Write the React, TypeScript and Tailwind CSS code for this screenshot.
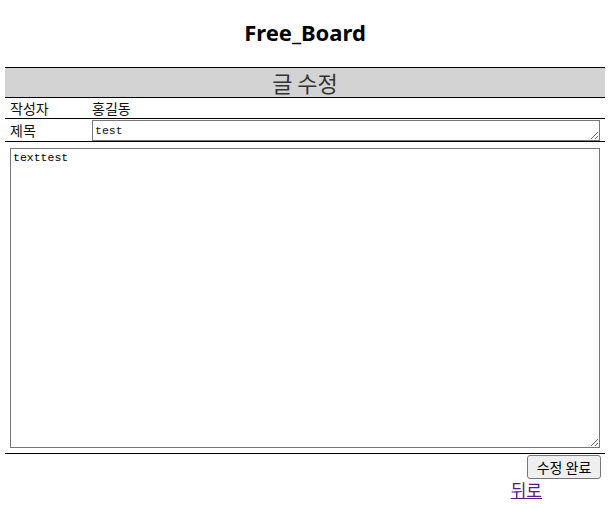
import React from "react";

export default function App() {
  return (
    <div className="w-[610px] h-[509px] bg-white text-black font-['Noto_Sans_CJK_KR','Noto_Sans',sans-serif]">
      <h2 className="pt-[17px] h-[67px] text-center text-[22px] font-bold leading-[30px] font-['Noto_Sans','Noto_Sans_CJK_KR',sans-serif]">
        Free_Board
      </h2>
      <div className="mx-[5px]">
        <div className="h-[31px] border-y border-black bg-[#d3d3d3] text-center text-[22px] leading-[29px] text-[#333]">
          글 수정
        </div>
        <div className="flex h-[21px] border-b border-black text-[14px] leading-[20px] text-[#111]">
          <div className="w-[87px] pl-[5px]">작성자</div>
          <div>홍길동</div>
        </div>
        <div className="flex h-[23px] items-start border-b border-black text-[14px] leading-[20px] text-[#111]">
          <div className="w-[87px] pl-[5px] pt-px">제목</div>
          <textarea
            rows={1}
            defaultValue="test"
            className="mt-px h-[21px] w-[508px] border border-[#767676] bg-white px-[2px] py-0 font-['Liberation_Mono',monospace] text-[11.5px] leading-[19px]"
          />
        </div>
        <div className="border-b border-black pt-[6px] pb-[5px] pl-[5px]">
          <textarea
            defaultValue="texttest"
            className="block h-[300px] w-[590px] border border-[#767676] bg-white px-[2px] py-[1px] font-['Liberation_Mono',monospace] text-[11.5px] leading-[15px]"
          />
        </div>
      </div>
      <div className="flex justify-end pr-[9px] pt-px">
        <button className="h-[24px] w-[74px] rounded-[3px] border border-[#767676] bg-[#efefef] text-[14px] leading-[20px]">
          수정 완료
        </button>
      </div>
      <div className="flex justify-end pr-[68px]">
        <a href="#" className="text-[17px] leading-[22px] text-[#551a8b] underline">
          뒤로
        </a>
      </div>
    </div>
  );
}
